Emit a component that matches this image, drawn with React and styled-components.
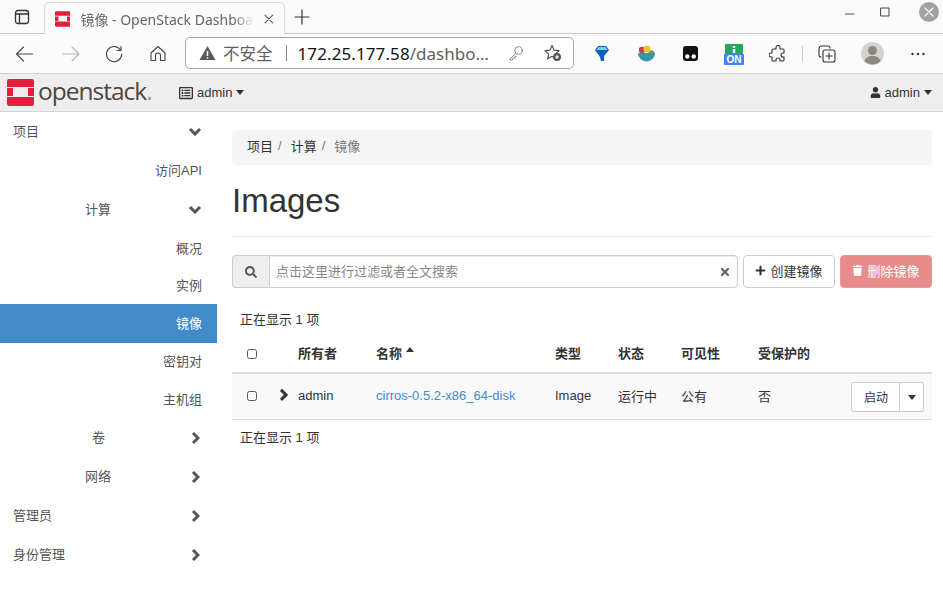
import React from "react";
import styled, { createGlobalStyle } from "styled-components";
import { FaUser, FaSearch, FaTimes, FaPlus, FaTrash, FaRegListAlt } from "react-icons/fa";

const sans = `"Liberation Sans", "Noto Sans CJK SC", sans-serif`;
const ui = `"Noto Sans", "Noto Sans CJK SC", sans-serif`;

const Global = createGlobalStyle`
  html, body { margin: 0; padding: 0; background: #fff; overflow: hidden; }
  * { box-sizing: border-box; }
`;

const Page = styled.div`
  width: 943px; height: 611px; display: flex; flex-direction: column; overflow: hidden;
  font-family: ${sans}; font-size: 13px; color: #333;
`;
const TabStrip = styled.div`
  height: 34px; flex: none; background: #fafafa; border-bottom: 1px solid #c9c9c9;
  display: flex; align-items: flex-end;
`;
const WinBtn = styled.button`
  width: 44px; height: 33px; border: 0; background: none; padding: 0; display: flex; align-items: center; justify-content: center;
`;
const Tab = styled.div`
  width: 241px; height: 32px; margin-bottom: -1px; background: #fbfbfb; border: 1px solid #dcdcdc; border-bottom: 0;
  border-radius: 5px 5px 0 0; display: flex; align-items: center; padding: 0 10px; gap: 10px; font-family: ${ui}; font-size: 14px; color: #666;
`;
const TabTitle = styled.span`
  width: 174px; white-space: nowrap; overflow: hidden; flex: none;
  -webkit-mask-image: linear-gradient(to right, #000 88%, transparent 100%);
  mask-image: linear-gradient(to right, #000 88%, transparent 100%);
`;
const NewTab = styled.div`
  width: 34px; height: 33px; display: flex; align-items: center; justify-content: center;
`;
const WinControls = styled.div`
  margin-left: auto; align-self: flex-start; height: 24px; display: flex; align-items: center; padding-right: 4px; gap: 25px;
`;
const CloseDot = styled.div`
  width: 20px; height: 20px; border-radius: 50%; background: #a2a2a2; display: flex; align-items: center; justify-content: center; margin-left: 4px;
`;
const Toolbar = styled.div`
  height: 40px; flex: none; background: #fbfbfb; border-bottom: 1px solid #d2d2d2; display: flex; align-items: center;
`;
const NavIcon = styled.div`
  width: ${p => p.$w || 44}px; display: flex; align-items: center; justify-content: center; flex: none;
`;
const AddressBar = styled.div`
  width: 389px; height: 32px; margin-left: 6px; margin-top: -1px; background: #fff; border: 1px solid #a8a8a8; border-radius: 5px; display: flex; align-items: center; padding: 0 11px 0 13px;
  font-family: ${ui}; font-size: 16.5px; color: #5f5f5f; flex: none;
`;
const Warn = styled.span` display: flex; margin-right: 7px; `;
const Sep = styled.span` width: 1px; height: 16px; background: #888; margin: 0 11px 0 13px; `;
const Host = styled.span` color: #111; font-size: 17px; letter-spacing: .1px; `;
const UrlRest = styled.span` color: #5f5f5f; font-size: 17px; white-space: nowrap; `;
const AddrIcons = styled.div` margin-left: auto; display: flex; align-items: center; gap: 20px; `;
const Divider = styled.span` width: 1px; height: 16px; background: #c8c8c8; margin: 0 2px; flex: none; `;
const Extensions = styled.div` display: flex; align-items: center; margin-left: 6px; `;
const NavBar = styled.div`
  height: 38px; flex: none; background: #eee; border-bottom: 1px solid #d5d5d5; display: flex; align-items: center; padding: 0 11px 0 7px;
`;
const Brand = styled.div` display: flex; align-items: center; gap: 4px; width: 172px; `;
const BrandText = styled.span`
  font-family: "Open Sans", sans-serif; font-size: 24.5px; font-weight: 500; letter-spacing: -1px; color: #4a4644; line-height: 1; margin-top: -2px;
`;
const BrandDot = styled.span` color: #999; `;
const NavDrop = styled.div`
  display: flex; align-items: center; gap: 4px; font-size: 13px; color: #333; line-height: 1;
`;
const Caret = styled.span`
  display: inline-block; width: 0; height: 0; border-left: 4.5px solid transparent; border-right: 4.5px solid transparent;
  ${p => p.$up ? "border-bottom: 5px solid #333;" : "border-top: 5px solid #333;"}
`;
const Spacer = styled.div` flex: 1; `;
const Body = styled.div` flex: 1; display: flex; min-height: 0; `;
const Sidebar = styled.nav` width: 217px; flex: none; `;
const SideItem = styled.div`
  height: ${p => p.$h || 38}px; display: flex; align-items: center; justify-content: flex-end; padding: 0 15px 2px 0;
  background: ${p => p.$active ? "#428bca" : "transparent"}; color: ${p => p.$active ? "#fff" : "#555"};
`;
const SideHead = styled.div`
  height: 39px; display: grid; grid-template-columns: 1fr 14px; align-items: center; padding: 0 15px 0 13px; color: #555;
`;
const HeadLabel = styled.span`
  text-align: ${p => p.$pad ? "right" : "left"}; padding: 0 ${p => p.$pad || 0}px 2px 0;
`;
const ChevronSlot = styled.span` display: flex; align-items: center; justify-content: center; `;
const Main = styled.main` flex: 1; padding: 18px 11px 0 15px; min-width: 0; `;
const Crumbs = styled.div`
  height: 35px; background: #f5f5f5; border-radius: 4px; display: flex; align-items: center; padding: 0 0 4px 15px; color: #333;
`;
const Crumb = styled.span` color: ${p => p.$muted ? "#777" : "#333"}; `;
const CrumbSep = styled.span` color: #777; padding: 0 9px 0 5px; `;
const Title = styled.h1`
  margin: 0; height: 72px; border-bottom: 1px solid #eee; font-size: 33px; font-weight: 400; color: #333; line-height: 36px; padding-top: 18px;
`;
const ActionRow = styled.div` display: flex; margin-top: 18px; height: 33px; gap: 5px; `;
const SearchGroup = styled.div` width: 506px; display: flex; `;
const SearchAddon = styled.div`
  width: 37px; background: #eee; border: 1px solid #ccc; border-right: 0; border-radius: 4px 0 0 4px; display: flex; align-items: center; justify-content: center; color: #555;
`;
const SearchInput = styled.div`
  flex: 1; border: 1px solid #ccc; border-radius: 0 4px 4px 0; display: flex; align-items: center; justify-content: space-between; padding: 0 6px 2px; color: #888; box-shadow: inset 0 1px 1px rgba(0,0,0,.075);
`;
const ClearIcon = styled.span` display: flex; margin-top: 2px; `;
const Btn = styled.div`
  width: 92px; height: 33px; padding-bottom: 2px; border: 1px solid ${p => p.$danger ? "#e79a99" : "#ccc"}; border-radius: 4px;
  background: ${p => p.$danger ? "#e78c8a" : "#fff"}; color: ${p => p.$danger ? "#fff" : "#333"}; display: flex; align-items: center; justify-content: center; gap: 4px; white-space: nowrap;
`;
const Count = styled.div` padding-left: 8px; color: #333; height: ${p => p.$h}px; padding-top: ${p => p.$top || 0}px; display: flex; align-items: center; `;
const Row = styled.div`
  display: grid; grid-template-columns: 66px 78px 179px 63px 63px 77px 1fr auto; align-items: center;
  height: ${p => p.$head ? 38 : 46}px; font-weight: ${p => p.$head ? 700 : 400};
  background: ${p => p.$head ? "transparent" : "#f9f9f9"};
  border-bottom: ${p => p.$head ? "2px solid #ddd" : "1px solid #ddd"};
  padding: 0 8px ${p => p.$head ? 4 : 3}px 0;
`;
const SelectCell = styled.div`
  display: flex; align-items: center; padding-left: 15px; position: relative; margin-top: ${p => p.$head ? 4 : 2}px;
`;
const Box = styled.span`
  width: 10px; height: 10px; border: 1.5px solid #555; border-radius: 2.5px; background: #fff; flex: none;
`;
const Toggle = styled.span` position: absolute; left: 47px; top: 50%; transform: translateY(-58%); display: flex; `;
const NameLink = styled.a` color: #428bca; text-decoration: none; `;
const HeadName = styled.span` display: flex; align-items: center; gap: 4px; `;
const SortCaret = styled.span` display: flex; margin-top: -5px; `;
const BtnGroup = styled.div` display: flex; height: 30px; margin-top: 4px; `;
const GroupMain = styled.div`
  width: 49px; padding: 0 0 1px 1px; border: 1px solid #ccc; border-radius: 3px 0 0 3px; background: #fff; display: flex; align-items: center; justify-content: center; color: #333; font-size: 12px;
`;
const GroupCaret = styled.div`
  width: 24px; border: 1px solid #ccc; border-left: 0; border-radius: 0 3px 3px 0; background: #fff; display: flex; align-items: center; justify-content: center;
`;

const Chevron = ({ open, color = "#555" }) => (
  <ChevronSlot>
    {open
      ? <svg width="14" height="9" viewBox="0 0 14 9"><path d="M2 2l5 5 5-5" fill="none" stroke={color} strokeWidth="3" /></svg>
      : <svg width="9" height="14" viewBox="0 0 9 14"><path d="M2 2l5 5-5 5" fill="none" stroke={color} strokeWidth="3" /></svg>}
  </ChevronSlot>
);

const Stroke = ({ w = 20, h = 20, vb = "0 0 20 20", sw = 1.2, color = "#444", children }) => (
  <svg width={w} height={h} viewBox={vb} fill="none" stroke={color} strokeWidth={sw} strokeLinecap="round" strokeLinejoin="round">{children}</svg>
);

const Logo = ({ size = 27 }) => (
  <svg width={size} height={size} viewBox="0 0 27 27">
    <path fill="#e61e3d" d="M2 0h23a2 2 0 0 1 2 2v6H0V2a2 2 0 0 1 2-2zM0 9h6v8H0zM21 9h6v8h-6zM0 18h27v7a2 2 0 0 1-2 2H2a2 2 0 0 1-2-2z" />
  </svg>
);

export default function App() {
  return (
    <Page>
      <Global />
      <TabStrip>
        <WinBtn>
          <Stroke w={16} h={16} vb="0 0 16 16" sw={1.3} color="#333">
            <rect x="1.5" y="1.5" width="13" height="13" rx="2.5" />
            <path d="M1.5 5h13M5.5 5v9.5" />
          </Stroke>
        </WinBtn>
        <Tab>
          <Logo size={16} />
          <TabTitle>镜像 - OpenStack Dashboard</TabTitle>
          <Stroke w={10} h={10} vb="0 0 10 10" sw={1.1} color="#555"><path d="M1 1l8 8M9 1l-8 8" /></Stroke>
        </Tab>
        <NewTab>
          <Stroke w={16} h={16} vb="0 0 16 16" sw={1.2} color="#333"><path d="M8 1v14M1 8h14" /></Stroke>
        </NewTab>
        <WinControls>
          <Stroke w={10} h={10} vb="0 0 10 10" sw={1} color="#555"><path d="M0 7h9" /></Stroke>
          <Stroke w={10} h={10} vb="0 0 10 10" sw={1} color="#444"><rect x="1" y="1" width="8" height="8" /></Stroke>
          <CloseDot>
            <Stroke w={10} h={10} vb="0 0 10 10" sw={1.2} color="#fff"><path d="M1 1l8 8M9 1l-8 8" /></Stroke>
          </CloseDot>
        </WinControls>
      </TabStrip>
      <Toolbar>
        <NavIcon $w={50}><Stroke sw={1.1}><path d="M17.500 10H1.500M8.500 3l-7 7 7 7" /></Stroke></NavIcon>
        <NavIcon $w={42}><Stroke color="#b5b5b5" sw={1.1}><path d="M2 10h16M11 3l7 7-7 7" /></Stroke></NavIcon>
        <NavIcon $w={44}><Stroke sw={1.1}><path d="M16.500 6A7.600 7.600 0 1 0 17.700 10M17 2.500V6.500H13" /></Stroke></NavIcon>
        <NavIcon $w={43}><Stroke sw={1.1}><path d="M3 9l7-6.500L17 9v7.500h-4.500V11.500a2.500 2.500 0 0 0-5 0v5H3z" /></Stroke></NavIcon>
        <AddressBar>
          <Warn>
            <svg width="17" height="16" viewBox="0 0 17 16"><path fill="#5a5a5a" d="M8.500 1L16.500 15H.5z" /><path stroke="#fff" strokeWidth="1.600" d="M8.500 6v5M8.500 12v1.600" /></svg>
          </Warn>
          不安全
          <Sep />
          <Host>172.25.177.58</Host><UrlRest>/dashbo…</UrlRest>
          <AddrIcons>
            <Stroke w={16} h={16} vb="0 0 16 16" sw={1} color="#888"><circle cx="10.500" cy="5.500" r="3.800" /><path d="M7.800 8.200L2 14v1h2.500l.5-2h1.500l.5-1.500h1" /></Stroke>
            <svg width="18" height="18" viewBox="0 0 18 18"><path fill="none" stroke="#444" strokeWidth="1.100" strokeLinejoin="round" d="M8 1.500l2.100 4.600 5 .5-3.700 3.300 1 4.800L8 12.300l-4.400 2.600 1-4.800L1 6.600l5-.5z" /><circle cx="13" cy="13" r="4" fill="#555" /><path stroke="#fff" strokeWidth="1.200" d="M13 11v4M11 13h4" /></svg>
          </AddrIcons>
        </AddressBar>
        <Extensions>
          <NavIcon>
            <svg width="14" height="15" viewBox="0 0 14 15"><path fill="#0f5fb8" d="M3 0h8l3 4-5 6v5H6l-1-4-5-7z" /><path fill="#6fd0f5" d="M3.500 1h7L12.500 4h-11z" /></svg>
          </NavIcon>
          <NavIcon>
            <svg width="17" height="18" viewBox="0 0 17 18"><path fill="#3797a8" d="M0 8h17a8.500 8.500 0 0 1-17 0z" /><path fill="#6ea83a" d="M10 8a3.500 3.500 0 0 1 6.500-1V8z" /><circle cx="4" cy="5" r="3.200" fill="#b8434a" /><circle cx="9" cy="4" r="3.500" fill="#eec232" /></svg>
          </NavIcon>
          <NavIcon>
            <svg width="15" height="15" viewBox="0 0 15 15"><rect width="15" height="15" rx="3" fill="#111" /><circle cx="4.300" cy="10.500" r="2.200" fill="#fff" /><circle cx="10.700" cy="10.500" r="2.200" fill="#fff" /></svg>
          </NavIcon>
          <NavIcon>
            <svg width="20" height="22" viewBox="0 0 20 22"><path fill="#25a55f" d="M2 1h16a1 1 0 0 1 1 1v9H1V2a1 1 0 0 1 1-1z" /><rect x="8.800" y="3" width="2.500" height="1.800" fill="#fff" /><rect x="8.800" y="6" width="2.500" height="4" fill="#fff" /><rect y="11" width="20" height="11" rx="1" fill="#3f86e8" /><text x="10" y="20" textAnchor="middle" fontFamily="Liberation Sans" fontWeight="700" fontSize="10" fill="#fff">ON</text></svg>
          </NavIcon>
          <NavIcon>
            <Stroke w={18} h={18} vb="0 0 18 18" sw={1.1} color="#333"><path d="M7 2.500a2 2 0 0 1 4 0V4h3a1 1 0 0 1 1 1v3h-1a2 2 0 0 0 0 4h1v3a1 1 0 0 1-1 1h-3v-1a2 2 0 0 0-4 0v1H4a1 1 0 0 1-1-1v-3H2a2 2 0 0 1 0-4h1V5a1 1 0 0 1 1-1h3z" /></Stroke>
          </NavIcon>
          <Divider />
          <NavIcon>
            <Stroke w={18} h={18} vb="0 0 18 18" sw={1.1} color="#333"><path d="M3 12a2 2 0 0 1-2-2V4a3 3 0 0 1 3-3h6a2 2 0 0 1 2 2" /><rect x="5" y="5" width="12" height="12" rx="2" /><path d="M11 8v6M8 11h6" /></Stroke>
          </NavIcon>
          <NavIcon $w={46}>
            <svg width="23" height="23" viewBox="0 0 23 23"><circle cx="11.500" cy="11.500" r="11.500" fill="#d6d3cf" /><circle cx="11.500" cy="8.500" r="4.500" fill="#8b8883" /><path fill="#8b8883" d="M3.500 19c1-3.500 4-5 8-5s7 1.500 8 5a11 11 0 0 1-16 0z" /></svg>
          </NavIcon>
          <NavIcon $w={46}>
            <svg width="14" height="4" viewBox="0 0 14 4" fill="#333"><circle cx="1.500" cy="2" r="1.200" /><circle cx="7" cy="2" r="1.200" /><circle cx="12.500" cy="2" r="1.200" /></svg>
          </NavIcon>
        </Extensions>
      </Toolbar>
      <NavBar>
        <Brand>
          <Logo />
          <BrandText>openstack<BrandDot>.</BrandDot></BrandText>
        </Brand>
        <NavDrop><FaRegListAlt size={14} color="#333" /> admin <Caret /></NavDrop>
        <Spacer />
        <NavDrop><FaUser size={11} color="#333" /> admin <Caret /></NavDrop>
      </NavBar>
      <Body>
        <Sidebar>
          <SideHead><HeadLabel>项目</HeadLabel><Chevron open /></SideHead>
          <SideItem $h={39}>访问API</SideItem>
          <SideHead><HeadLabel $pad={77}>计算</HeadLabel><Chevron open /></SideHead>
          <SideItem>概况</SideItem>
          <SideItem $h={37}>实例</SideItem>
          <SideItem $active $h={39}>镜像</SideItem>
          <SideItem $h={37}>密钥对</SideItem>
          <SideItem>主机组</SideItem>
          <SideHead><HeadLabel $pad={83}>卷</HeadLabel><Chevron /></SideHead>
          <SideHead><HeadLabel $pad={77}>网络</HeadLabel><Chevron /></SideHead>
          <SideHead><HeadLabel>管理员</HeadLabel><Chevron /></SideHead>
          <SideHead><HeadLabel>身份管理</HeadLabel><Chevron /></SideHead>
        </Sidebar>
        <Main>
          <Crumbs>
            <Crumb>项目</Crumb><CrumbSep>/</CrumbSep>
            <Crumb>计算</Crumb><CrumbSep>/</CrumbSep>
            <Crumb $muted>镜像</Crumb>
          </Crumbs>
          <Title>Images</Title>
          <ActionRow>
            <SearchGroup>
              <SearchAddon><FaSearch size={12} /></SearchAddon>
              <SearchInput>点击这里进行过滤或者全文搜索<ClearIcon><FaTimes size={12} color="#666" /></ClearIcon></SearchInput>
            </SearchGroup>
            <Btn><FaPlus size={11} /> 创建镜像</Btn>
            <Btn $danger><FaTrash size={11} /> 删除镜像</Btn>
          </ActionRow>
          <Count $h={48} $top={12}>正在显示 1 项</Count>
          <Row $head>
            <SelectCell $head><Box /></SelectCell>
            <span>所有者</span>
            <HeadName>名称<SortCaret><Caret $up /></SortCaret></HeadName>
            <span>类型</span><span>状态</span><span>可见性</span><span>受保护的</span><span />
          </Row>
          <Row>
            <SelectCell><Box /><Toggle><Chevron color="#333" /></Toggle></SelectCell>
            <span>admin</span>
            <NameLink>cirros-0.5.2-x86_64-disk</NameLink>
            <span>Image</span><span>运行中</span><span>公有</span><span>否</span>
            <BtnGroup><GroupMain>启动</GroupMain><GroupCaret><Caret /></GroupCaret></BtnGroup>
          </Row>
          <Count $h={32}>正在显示 1 项</Count>
        </Main>
      </Body>
    </Page>
  );
}
